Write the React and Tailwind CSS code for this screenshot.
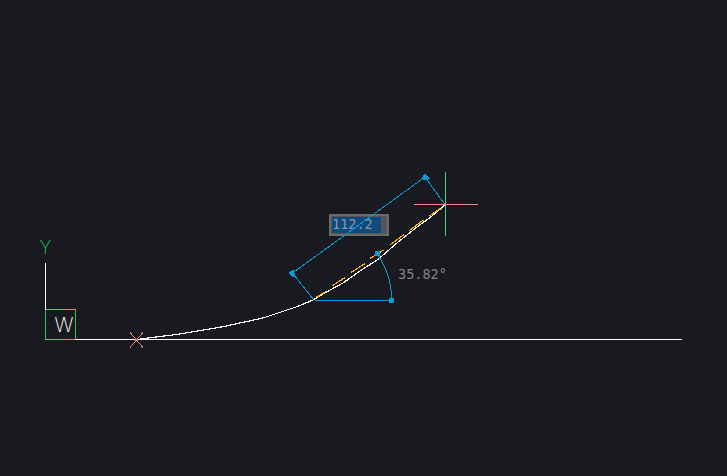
import React from 'react';

const BLUE = '#0b9ad6';
const SALMON = '#e5807c';
const GREEN = '#22c55e';

// polar tracking dashes along the chord
const dashes = [
  [316, 297.5, 326, 291.5],
  [332, 286, 345, 277.5],
  [351, 272.5, 365, 263.5],
  [370, 258.5, 383.5, 250],
  [390.5, 244.5, 404, 234.5],
  [409.5, 230.5, 423.5, 220],
  [429.5, 216, 440, 208.5],
];

const DynamicInput = () => (
  <div className="absolute left-[329px] top-[214px] flex h-[22px] w-[60px] border-2 border-[#6a6a6a] bg-[#555555] p-px">
    <div className="flex h-full w-[49px] items-center bg-[#0f4a7c] font-['DejaVu_Sans_Mono',monospace] text-[13.5px] leading-none text-[#8497a6]">
      112.2
    </div>
  </div>
);

export default function App() {
  return (
    <div className="relative h-screen w-full overflow-hidden bg-[#181a1f]">
      <DynamicInput />
      <svg className="absolute inset-0 h-full w-full" viewBox="0 0 727 476" fill="none" shapeRendering="crispEdges">
        {/* UCS icon */}
        <path d="M45.5 263V339.5" stroke="#ffffff" />
        <path d="M45.5 309.5V339.5M75.5 309.5V339.5" stroke={GREEN} />
        <path d="M45.5 309.5H75.5M45.5 339.5H75.5" stroke={SALMON} />
        <text x="45.5" y="254" textAnchor="middle" fill={GREEN} fontFamily="Inter, sans-serif" fontWeight="200" fontSize="18">Y</text>
        <text x="64" y="332" textAnchor="middle" fill="#ffffff" fontFamily="Inter, sans-serif" fontWeight="200" fontSize="20">W</text>

        {/* x axis and start marker */}
        <path d="M75.5 339.5H682" stroke="#ffffff" />
        <path d="M130 332.5L143 347.5M143 332.5L130 347.5" stroke={SALMON} />

        {/* spline */}
        <path
          d="M140 339L176.7 334.5L223 326.7L263 318L297 306.7L313 300L327 291.7L343 283L360 271L377 260L385 253.5L395 244.5L415 228.5L432 216L445 205"
          stroke="#ffffff"
          strokeWidth="1.2"
        />

        {/* tracking line */}
        {dashes.map(([x1, y1, x2, y2], i) => (
          <line key={i} x1={x1} y1={y1} x2={x2} y2={y2} stroke="#ffb300" strokeWidth="1.2" />
        ))}

        {/* aligned dimension */}
        <path d="M444.5 204L425 177L292.5 273L313.5 299.5" stroke={BLUE} />
        <path d="M422 178.5L425 174L429 178.5L426 180Z" fill={BLUE} stroke={BLUE} />
        <path d="M289.5 273L293 270L295 276L292 276Z" fill={BLUE} stroke={BLUE} />

        {/* angular dimension */}
        <path d="M315 300.5H391.5" stroke={BLUE} />
        <path d="M391.5 300.5A76.5 76.5 0 0 0 377 254" stroke={BLUE} />
        <rect x="389.5" y="298" width="4" height="4" fill={BLUE} stroke={BLUE} />
        <rect x="375" y="251" width="4" height="4" fill={BLUE} stroke={BLUE} />
        <rect x="377" y="253" width="1" height="1" fill="#c060d0" />

        {/* crosshair */}
        <path d="M414 204.5H478" stroke="#e58a84" />
        <path d="M445.5 172V236" stroke="#3fd47f" />

        <text x="398" y="279" fill="#858585" fontFamily="'DejaVu Sans Mono', monospace" fontSize="13.5">35.82°</text>
      </svg>
    </div>
  );
}
